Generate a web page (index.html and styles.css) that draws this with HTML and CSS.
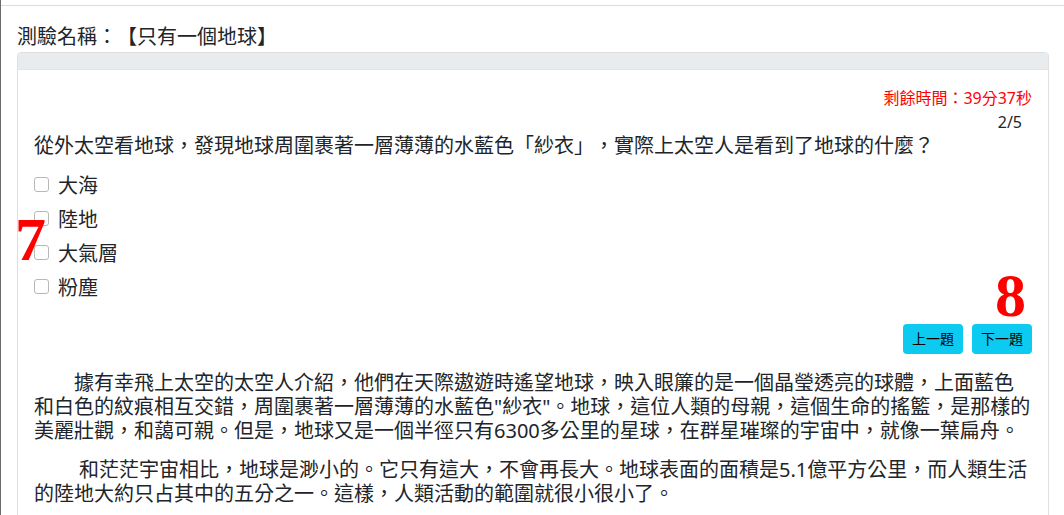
FILE: index.html
```html
<!DOCTYPE html>
<html lang="zh-Hant">
<head>
    <meta charset="UTF-8">
    <meta name="viewport" content="width=device-width, initial-scale=1.0">
    <title>測驗</title>
    <link rel="stylesheet" href="styles.css">
</head>
<body>

    <div class="topbar"></div>

    <div class="page">
        <h1 class="quiz-title">測驗名稱：【只有一個地球】</h1>

        <!-- Question Card -->
        <div class="card">
            <div class="card-header"></div>
            <div class="card-body">
                <div class="timer">剩餘時間：39分37秒</div>
                <div class="progress">2/5</div>
                <div class="question">從外太空看地球，發現地球周圍裹著一層薄薄的水藍色「紗衣」，實際上太空人是看到了地球的什麼？</div>

                <div class="options">
                    <label class="option"><input type="checkbox"><span>大海</span></label>
                    <label class="option"><input type="checkbox"><span>陸地</span></label>
                    <label class="option"><input type="checkbox"><span>大氣層</span></label>
                    <label class="option"><input type="checkbox"><span>粉塵</span></label>
                </div>

                <div class="actions">
                    <button class="btn">上一題</button>
                    <button class="btn">下一題</button>
                </div>

                <div class="article">
                    <p>據有幸飛上太空的太空人介紹，他們在天際遨遊時遙望地球，映入眼簾的是一個晶瑩透亮的球體，上面藍色和白色的紋痕相互交錯，周圍裹著一層薄薄的水藍色"紗衣"。地球，這位人類的母親，這個生命的搖籃，是那樣的美麗壯觀，和藹可親。但是，地球又是一個半徑只有6300多公里的星球，在群星璀璨的宇宙中，就像一葉扁舟。</p>
                    <p class="wide-indent">和茫茫宇宙相比，地球是渺小的。它只有這大，不會再長大。地球表面的面積是5.1億平方公里，而人類生活的陸地大約只占其中的五分之一。這樣，人類活動的範圍就很小很小了。</p>
                </div>
            </div>
        </div>
    </div>

    <!-- Annotation marks -->
    <div class="mark mark-7">7</div>
    <div class="mark mark-8">8</div>

</body>
</html>
```

FILE: styles.css
```css
/* Global Styles */
body {
    font-family: 'Noto Sans', 'Noto Sans CJK TC', sans-serif;
    margin: 0;
    padding: 0;
    color: #212529;
    background: #fff;
    border-left: 1px solid #6b6b6b;
    position: relative;
    min-height: 515px;
    overflow: hidden;
    text-spacing-trim: space-all;
}

.topbar {
    height: 5px;
    border-bottom: 1px solid #dcdcdc;
}

.page {
    padding: 0 15px 0 16px;
}

/* Title */
.quiz-title {
    font-size: 20px;
    font-weight: normal;
    line-height: 24px;
    margin: 0;
    padding-top: 19px;
    margin-bottom: 3px;
}

/* Card */
.card {
    border: 1px solid #dfdfdf;
    border-radius: 4px;
}

.card-header {
    height: 16px;
    background: #e9ecef;
    border-bottom: 1px solid #e2e5e8;
    border-radius: 3px 3px 0 0;
}

.card-body {
    padding: 16px 16px 16px;
}

.timer {
    text-align: right;
    color: #ff0000;
    font-size: 16px;
    line-height: 24px;
}

.progress {
    text-align: right;
    font-size: 16px;
    line-height: 24px;
    padding-right: 10px;
}

.question {
    font-size: 20px;
    line-height: 24px;
}

/* Options */
.options {
    margin-top: 9px;
}

.option {
    display: flex;
    align-items: center;
    gap: 9px;
    height: 34px;
    font-size: 20px;
}

.option input {
    appearance: none;
    -webkit-appearance: none;
    width: 15px;
    height: 15px;
    margin: 0;
    border: 1px solid #b8b8b8;
    border-radius: 3px;
    background: #fff;
}

/* Buttons */
.actions {
    display: flex;
    justify-content: flex-end;
    gap: 9px;
    margin-top: 21px;
}

.btn {
    font-family: inherit;
    font-size: 14px;
    line-height: 30px;
    height: 30px;
    padding: 0 9px;
    border: none;
    border-radius: 4px;
    background-color: #0dcaf0;
    color: #000;
    cursor: pointer;
}

/* Article */
.article {
    margin-top: 17px;
}

.article p {
    font-size: 20px;
    line-height: 24px;
    margin: 0 0 15px;
    text-indent: 2em;
}

.article p.wide-indent {
    text-indent: calc(2em + 5px);
}

/* Red annotation numbers */
.mark {
    position: absolute;
    font-family: 'Liberation Serif', serif;
    font-weight: bold;
    font-size: 62px;
    line-height: 62px;
    color: #ff0000;
}

.mark-7 {
    left: 14px;
    top: 208px;
}

.mark-8 {
    left: 994px;
    top: 264px;
}
```
